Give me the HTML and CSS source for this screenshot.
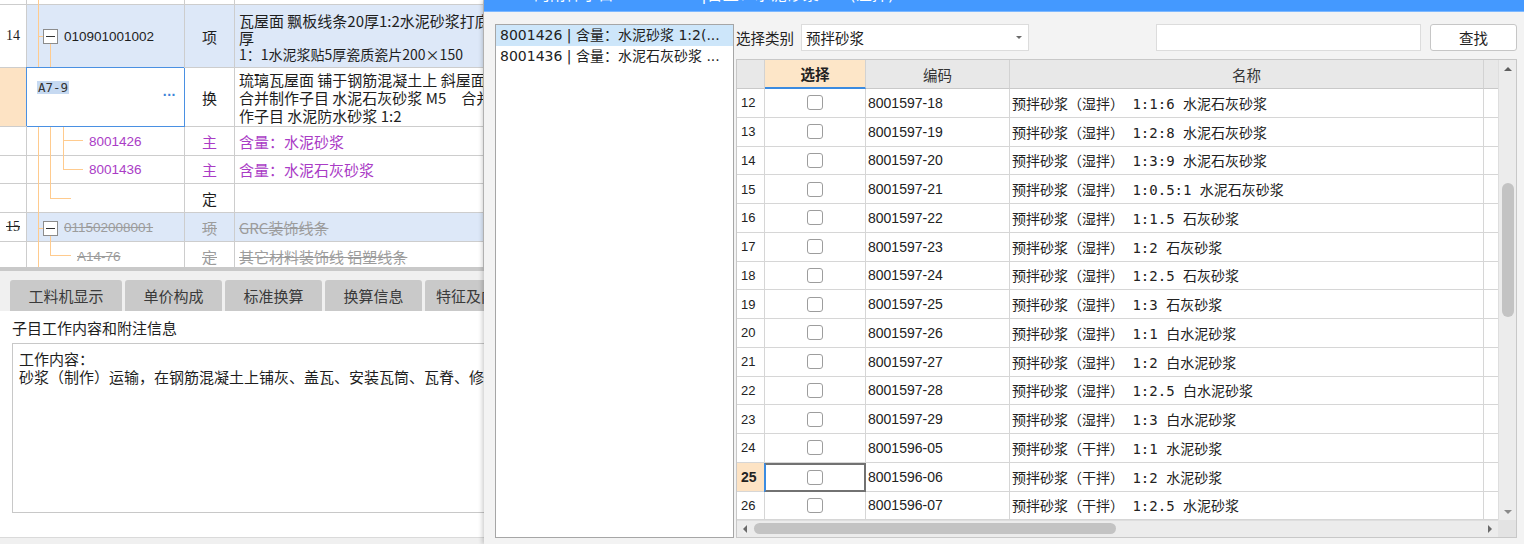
FILE: index.html
```html
<!DOCTYPE html>
<html lang="zh-CN">
<head>
<meta charset="utf-8">
<title>附件子目</title>
<link rel="stylesheet" href="styles.css">
</head>
<body>
<div class="app">
  <section class="left">
    <div class="tree">
      <div class="trow h-top"><div class="c-num"></div><div class="c-code"></div><div class="c-type"></div><div class="c-name"></div></div>
      <div class="trow h-14 blue">
        <div class="c-num">14</div>
        <div class="c-code pad1 mono-code">010901001002</div>
        <div class="c-type">项</div>
        <div class="c-name multi l16"><div>瓦屋面 飘板线条20厚1:2水泥砂浆打底</div><div>厚</div><div class="sm">1：1水泥浆贴5厚瓷质瓷片200×150</div></div>
      </div>
      <div class="trow h-a79">
        <div class="c-num peach"></div>
        <div class="c-code editing"><span class="hl">A7-9</span><span class="dots">...</span></div>
        <div class="c-type">换</div>
        <div class="c-name multi l18"><div>琉璃瓦屋面 铺于钢筋混凝土上 斜屋面</div><div>合并制作子目 水泥石灰砂浆 M5　合并</div><div>作子目 水泥防水砂浆 1:2</div></div>
      </div>
      <div class="trow h-29 purple">
        <div class="c-num"></div>
        <div class="c-code pad3 mono-code">8001426</div>
        <div class="c-type">主</div>
        <div class="c-name single">含量：水泥砂浆</div>
      </div>
      <div class="trow h-28 purple">
        <div class="c-num"></div>
        <div class="c-code pad3 mono-code">8001436</div>
        <div class="c-type">主</div>
        <div class="c-name single">含量：水泥石灰砂浆</div>
      </div>
      <div class="trow h-29">
        <div class="c-num"></div>
        <div class="c-code"></div>
        <div class="c-type">定</div>
        <div class="c-name single"></div>
      </div>
      <div class="trow h-29 blue struck">
        <div class="c-num">15</div>
        <div class="c-code pad1 mono-code">011502008001</div>
        <div class="c-type">项</div>
        <div class="c-name single">GRC装饰线条</div>
      </div>
      <div class="trow h-30 struck">
        <div class="c-num"></div>
        <div class="c-code pad2 mono-code">A14-76</div>
        <div class="c-type">定</div>
        <div class="c-name single">其它材料装饰线 铝塑线条</div>
      </div>
      <svg class="tree-lines" width="484" height="267" viewBox="0 0 484 267" shape-rendering="crispEdges">
        <g stroke="#ffcb8e" stroke-width="1" fill="none">
          <line x1="38.5" y1="0" x2="38.5" y2="67"/>
          <line x1="38.5" y1="127" x2="38.5" y2="267"/>
          <line x1="38" y1="36.5" x2="43" y2="36.5"/>
          <line x1="50.5" y1="43" x2="50.5" y2="67"/>
          <line x1="50.5" y1="127" x2="50.5" y2="198"/>
          <line x1="50" y1="198.5" x2="71" y2="198.5"/>
          <line x1="63.5" y1="127" x2="63.5" y2="169"/>
          <line x1="63" y1="140.5" x2="83" y2="140.5"/>
          <line x1="63" y1="169.5" x2="83" y2="169.5"/>
          <line x1="38" y1="228.5" x2="43" y2="228.5"/>
          <line x1="50.5" y1="236" x2="50.5" y2="255"/>
          <line x1="50" y1="255.5" x2="71" y2="255.5"/>
        </g>
        <g>
          <rect x="43.5" y="29.5" width="14" height="14" fill="#fff" stroke="#8c8c8c"/>
          <line x1="46" y1="36.5" x2="55" y2="36.5" stroke="#333"/>
          <rect x="43.5" y="221.5" width="14" height="14" fill="#fff" stroke="#8c8c8c"/>
          <line x1="46" y1="228.5" x2="55" y2="228.5" stroke="#333"/>
        </g>
      </svg>
    </div>
    <div class="splitter"></div>
    <div class="tabs">
      <div class="tab w1">工料机显示</div>
      <div class="tab">单价构成</div>
      <div class="tab">标准换算</div>
      <div class="tab">换算信息</div>
      <div class="tab">特征及内容</div>
    </div>
    <div class="info">
      <div class="info-title">子目工作内容和附注信息</div>
      <div class="info-box">
        <div>工作内容：</div>
        <div>砂浆（制作）运输，在钢筋混凝土上铺灰、盖瓦、安装瓦筒、瓦脊、修补</div>
      </div>
    </div>
    <div class="left-foot"></div>
  </section>

  <section class="dialog">
    <div class="dlg-title"><span>A7-9的附件子目 - 8001426|含量：水泥砂浆 1:2(湿拌)</span></div>
    <div class="dlg-body">
      <div class="list">
        <div class="item selected">8001426 | 含量：水泥砂浆 1:2(...</div>
        <div class="item">8001436 | 含量：水泥石灰砂浆 ...</div>
      </div>
      <div class="main">
        <div class="toolbar">
          <span class="lbl">选择类别</span>
          <div class="select"><span>预拌砂浆</span><span class="caret"></span></div>
          <div class="spacer"></div>
          <div class="search"></div>
          <div class="btn">查找</div>
        </div>
        <div class="grid">
          <div class="grid-top">
            <div class="cols">
              <div class="ghead">
                <div></div>
                <div class="h-sel">选择</div>
                <div>编码</div>
                <div>名称</div>
                <div></div>
              </div>
              <div class="gbody">
                <div class="grow"><div class="g-num">12</div><div class="g-chk"><i></i></div><div class="g-code">8001597-18</div><div class="g-name">预拌砂浆（湿拌） 1:1:6 水泥石灰砂浆</div><div></div></div>
                <div class="grow"><div class="g-num">13</div><div class="g-chk"><i></i></div><div class="g-code">8001597-19</div><div class="g-name">预拌砂浆（湿拌） 1:2:8 水泥石灰砂浆</div><div></div></div>
                <div class="grow"><div class="g-num">14</div><div class="g-chk"><i></i></div><div class="g-code">8001597-20</div><div class="g-name">预拌砂浆（湿拌） 1:3:9 水泥石灰砂浆</div><div></div></div>
                <div class="grow"><div class="g-num">15</div><div class="g-chk"><i></i></div><div class="g-code">8001597-21</div><div class="g-name">预拌砂浆（湿拌） 1:0.5:1 水泥石灰砂浆</div><div></div></div>
                <div class="grow"><div class="g-num">16</div><div class="g-chk"><i></i></div><div class="g-code">8001597-22</div><div class="g-name">预拌砂浆（湿拌） 1:1.5 石灰砂浆</div><div></div></div>
                <div class="grow"><div class="g-num">17</div><div class="g-chk"><i></i></div><div class="g-code">8001597-23</div><div class="g-name">预拌砂浆（湿拌） 1:2 石灰砂浆</div><div></div></div>
                <div class="grow"><div class="g-num">18</div><div class="g-chk"><i></i></div><div class="g-code">8001597-24</div><div class="g-name">预拌砂浆（湿拌） 1:2.5 石灰砂浆</div><div></div></div>
                <div class="grow"><div class="g-num">19</div><div class="g-chk"><i></i></div><div class="g-code">8001597-25</div><div class="g-name">预拌砂浆（湿拌） 1:3 石灰砂浆</div><div></div></div>
                <div class="grow"><div class="g-num">20</div><div class="g-chk"><i></i></div><div class="g-code">8001597-26</div><div class="g-name">预拌砂浆（湿拌） 1:1 白水泥砂浆</div><div></div></div>
                <div class="grow"><div class="g-num">21</div><div class="g-chk"><i></i></div><div class="g-code">8001597-27</div><div class="g-name">预拌砂浆（湿拌） 1:2 白水泥砂浆</div><div></div></div>
                <div class="grow"><div class="g-num">22</div><div class="g-chk"><i></i></div><div class="g-code">8001597-28</div><div class="g-name">预拌砂浆（湿拌） 1:2.5 白水泥砂浆</div><div></div></div>
                <div class="grow"><div class="g-num">23</div><div class="g-chk"><i></i></div><div class="g-code">8001597-29</div><div class="g-name">预拌砂浆（湿拌） 1:3 白水泥砂浆</div><div></div></div>
                <div class="grow"><div class="g-num">24</div><div class="g-chk"><i></i></div><div class="g-code">8001596-05</div><div class="g-name">预拌砂浆（干拌） 1:1 水泥砂浆</div><div></div></div>
                <div class="grow current"><div class="g-num">25</div><div class="g-chk focus"><i></i></div><div class="g-code">8001596-06</div><div class="g-name">预拌砂浆（干拌） 1:2 水泥砂浆</div><div></div></div>
                <div class="grow"><div class="g-num">26</div><div class="g-chk"><i></i></div><div class="g-code">8001596-07</div><div class="g-name">预拌砂浆（干拌） 1:2.5 水泥砂浆</div><div></div></div>
              </div>
            </div>
            <div class="vscroll">
              <div class="arrow-btn"><span class="tri up"></span></div>
              <div class="vtrack"><div class="vthumb"></div></div>
              <div class="arrow-btn"><span class="tri down"></span></div>
            </div>
          </div>
          <div class="hscroll-row">
            <div class="hscroll">
              <div class="harrow"><span class="tri left"></span></div>
              <div class="htrack"><div class="hthumb"></div></div>
              <div class="harrow"><span class="tri right"></span></div>
            </div>
            <div class="corner"></div>
          </div>
        </div>
      </div>
    </div>
  </section>
</div>
</body>
</html>
```

FILE: styles.css
```css
* { box-sizing: border-box; }
html, body { margin: 0; padding: 0; }
body {
  width: 1524px;
  height: 544px;
  overflow: hidden;
  font-family: "Noto Sans CJK SC", sans-serif;
  font-size: 14px;
  color: #222;
  background: #f0f0f0;
}
.app { display: flex; height: 544px; }

/* ---------- left pane ---------- */
.left {
  width: 484px;
  flex: none;
  display: flex;
  flex-direction: column;
  overflow: hidden;
  background: #f0f0f0;
}
.tree {
  position: relative;
  height: 267px;
  flex: none;
  overflow: hidden;
  background: #fff;
}
.tree-lines { position: absolute; left: 0; top: 0; pointer-events: none; }
.trow {
  display: grid;
  grid-template-columns: 27px 158px 50px 249px;
  font-size: 15px;
  color: #1e1e1e;
}
.trow > div {
  border-right: 1px solid #cdcdcd;
  border-bottom: 1px solid #cdcdcd;
  overflow: hidden;
  white-space: nowrap;
}
.h-top { height: 5px; }
.h-14 { height: 63px; }
.h-a79 { height: 59px; }
.h-29 { height: 29px; }
.h-28 { height: 28px; }
.h-30 { height: 30px; }
.c-num {
  display: flex;
  align-items: center;
  padding-left: 6px;
  font-family: "Liberation Serif", serif;
  font-size: 14px;
  background: #fff;
}
.c-code { display: flex; align-items: center; }
.mono-code { font-family: "Liberation Sans", sans-serif; font-size: 13.5px; }
.pad1 { padding-left: 37px; }
.pad2 { padding-left: 50px; }
.pad3 { padding-left: 62px; }
.c-type { display: flex; align-items: center; justify-content: center; }
.c-name { padding-left: 4px; }
.c-name.single { display: flex; align-items: center; }
.multi.l16 { line-height: 16.5px; padding-top: 8px; }
.multi.l18 { line-height: 18px; padding-top: 3px; }
.multi .sm { font-size: 14px; }
.blue > div { background: #dde8f8; }
.blue > .c-num { background: #fff; }
.peach { background: #fde3c4 !important; }
.purple .c-code, .purple .c-type, .purple .c-name { color: #aa3cc6; }
.struck .c-code, .struck .c-type, .struck .c-name, .struck .c-num {
  color: #9c9c9c;
  text-decoration: line-through;
}
.struck .c-num { color: #222; }
.editing {
  position: relative;
  display: block !important;
  background: #fff;
  border-right: 1px solid #4a90e2 !important;
  border-bottom: 1px solid #4a90e2 !important;
  box-shadow: -1px -1px 0 0 #4a90e2;
  padding: 7px 0 0 10px;
}
.hl {
  display: inline-block;
  font-family: "DejaVu Sans Mono", monospace;
  font-size: 12.5px;
  line-height: 13px;
  background: #c6d9f1;
  color: #333;
  padding: 0 1px;
}
.dots {
  position: absolute;
  right: 8px;
  top: 15px;
  color: #3d84d8;
  font-family: "Liberation Sans", sans-serif;
  font-weight: bold;
  font-size: 14px;
  letter-spacing: 0.5px;
}

.splitter { height: 4px; flex: none; background: #c9c9c9; }
.tabs {
  height: 40px;
  flex: none;
  display: flex;
  gap: 3px;
  padding: 9px 0 0 10px;
  background: #f0f0f0;
}
.tab {
  width: 97px;
  flex: none;
  background: #c9c9c9;
  border-radius: 3px 3px 0 0;
  display: flex;
  align-items: center;
  justify-content: center;
  font-size: 15px;
  color: #3a3a3a;
  white-space: nowrap;
  overflow: hidden;
}
.tab.w1 { width: 112px; }
.info {
  height: 226px;
  flex: none;
  background: #fff;
  padding: 7px 0 0 12px;
}
.info-title { font-size: 15px; line-height: 20px; color: #1e1e1e; }
.info-box {
  margin-top: 5px;
  height: 170px;
  width: 490px;
  border: 1px solid #c8c8c8;
  padding: 6px 0 0 6px;
  font-size: 15px;
  line-height: 18px;
  color: #1e1e1e;
  white-space: nowrap;
  overflow: hidden;
}
.left-foot { flex: 1; border-top: 1px solid #dadada; background: #f0f0f0; }

/* ---------- dialog ---------- */
.dialog {
  flex: 1;
  display: flex;
  flex-direction: column;
  background: #f3f3f3;
  box-shadow: -2px 0 4px rgba(0, 0, 0, 0.18);
  z-index: 1;
}
.dlg-title {
  height: 12px;
  flex: none;
  background: #4499ff;
  overflow: hidden;
  border-bottom: 1px solid #7db8ff;
}
.dlg-title span {
  display: block;
  margin-top: -13px;
  padding-left: 13px;
  color: #fff;
  font-family: "DejaVu Sans", "Noto Sans CJK SC", sans-serif;
  font-size: 16px;
  line-height: 16px;
  white-space: nowrap;
}
.dlg-body {
  flex: 1;
  display: flex;
  gap: 2px;
  padding: 12px 9px 9px 11px;
}
.list {
  width: 239px;
  flex: none;
  background: #fff;
  border: 1px solid #a6a6a6;
}
.item {
  height: 21px;
  line-height: 21px;
  padding-left: 4px;
  font-family: "DejaVu Sans", "Noto Sans CJK SC", sans-serif;
  font-size: 14px;
  color: #222;
  white-space: nowrap;
  overflow: hidden;
}
.item.selected { background: #cde6fa; }
.main { flex: 1; display: flex; flex-direction: column; gap: 8px; min-width: 0; }
.toolbar { height: 27px; flex: none; display: flex; align-items: stretch; }
.lbl { font-size: 14.5px; display: flex; align-items: center; color: #222; }
.select {
  width: 228px;
  margin-left: 7px;
  background: #fff;
  border: 1px solid #dcdcdc;
  display: flex;
  align-items: center;
  justify-content: space-between;
  padding: 0 6px 0 4px;
  font-size: 14.5px;
}
.caret {
  width: 0; height: 0;
  border-left: 3px solid transparent;
  border-right: 3px solid transparent;
  border-top: 3px solid #6a6a6a;
}
.spacer { flex: 1; }
.search { width: 265px; background: #fff; border: 1px solid #dcdcdc; }
.btn {
  width: 87px;
  margin-left: 9px;
  background: #fff;
  border: 1px solid #c6c6c6;
  border-radius: 3px;
  display: flex;
  align-items: center;
  justify-content: center;
  font-size: 14.5px;
  color: #222;
}

.grid {
  flex: 1;
  border: 1px solid #c8c8c8;
  background: #fff;
  display: flex;
  flex-direction: column;
}
.grid-top { flex: 1; display: flex; min-height: 0; }
.cols { width: 761px; flex: none; display: flex; flex-direction: column; overflow: hidden; }
.ghead, .grow {
  display: grid;
  grid-template-columns: 28px 101px 144px 474px 14px;
}
.ghead { height: 29px; flex: none; background: #e8e8e8; }
.ghead > div {
  border-right: 1px solid #d2d2d2;
  border-bottom: 1px solid #c9c9c9;
  display: flex;
  align-items: center;
  justify-content: center;
  font-size: 14.5px;
  color: #333;
}
.ghead > div:last-child { border-right: none; }
.ghead .h-sel {
  background: #fde6c8;
  font-weight: bold;
  color: #222;
  border-bottom: 2px solid #3b8be0;
}
.gbody { flex: 1; overflow: hidden; }
.grow { height: 28.75px; }
.grow > div {
  border-right: 1px solid #d6d6d6;
  border-bottom: 1px solid #d6d6d6;
  display: flex;
  align-items: center;
  white-space: nowrap;
  overflow: hidden;
}
.grow > div:last-child { border-right: none; }
.g-num { padding-left: 4px; font-family: "Liberation Sans", sans-serif; font-size: 13px; color: #222; }
.g-chk { justify-content: center; }
.g-chk i {
  display: block;
  width: 16px;
  height: 15px;
  border: 1px solid #9d9d9d;
  border-radius: 3px;
  background: #fff;
}
.g-code { padding-left: 2px; font-family: "Liberation Sans", sans-serif; font-size: 14px; color: #222; }
.g-name { padding-left: 2px; font-family: "DejaVu Sans Mono", "Noto Sans CJK SC", monospace; font-size: 14px; color: #222; }
.current .g-num { background: #fde3c4; font-weight: bold; font-size: 14px; }
.g-chk.focus {
  border: 2px solid #727272;
  border-left: 1px solid #3b8be0;
  box-shadow: -1px 0 0 0 #3b8be0;
}

.vscroll {
  width: 18px;
  flex: none;
  background: #ececec;
  border-left: 1px solid #dedede;
  display: flex;
  flex-direction: column;
}
.arrow-btn { height: 17px; flex: none; display: flex; align-items: center; justify-content: center; }
.vtrack { flex: 1; position: relative; padding: 106px 2px 0 3px; }
.vthumb { height: 134px; background: #c3c3c3; border-radius: 6px; }
.tri { width: 0; height: 0; display: block; }
.tri.up { border-left: 4px solid transparent; border-right: 4px solid transparent; border-bottom: 4px solid #5e5e5e; }
.tri.down { border-left: 4px solid transparent; border-right: 4px solid transparent; border-top: 4px solid #8a8a8a; }
.tri.left { border-top: 4px solid transparent; border-bottom: 4px solid transparent; border-right: 4px solid #6a6a6a; }
.tri.right { border-top: 4px solid transparent; border-bottom: 4px solid transparent; border-left: 4px solid #6a6a6a; }

.hscroll-row { height: 17px; flex: none; display: flex; }
.hscroll {
  width: 761px;
  flex: none;
  background: #ececec;
  border-top: 1px solid #dedede;
  display: flex;
}
.harrow { width: 16px; flex: none; display: flex; align-items: center; justify-content: center; }
.htrack { flex: 1; padding: 2px 0 3px 1px; }
.hthumb { width: 362px; height: 100%; background: #c3c3c3; border-radius: 6px; }
.corner { flex: 1; background: #e3e3e3; }
```
